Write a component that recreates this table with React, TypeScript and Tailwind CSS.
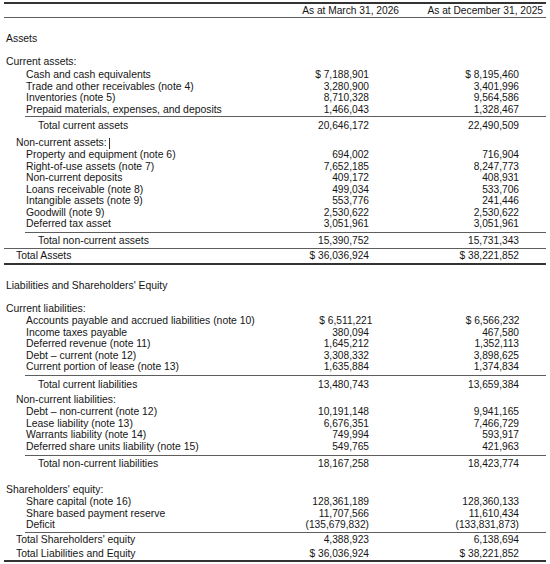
type RowProps = {
  label: string;
  a?: string;
  b?: string;
  h: string;
  pad: string;
  indent?: boolean;
  caret?: boolean;
};

const Row = ({ label, a, b, h, pad, indent, caret }: RowProps) => {
  return (
    <div className={`flex items-center ${h} ${indent ? "ml-[21px]" : ""}`}>
      <div className={`flex-1 whitespace-nowrap text-[10.4px] ${pad}`}>
        {label}
        {caret && <span className="ml-[2px] inline-block h-[11px] w-px bg-[#333] align-middle" />}
      </div>
      <div className="w-[120px] text-right">{a}</div>
      <div className="w-[30px]" />
      <div className="w-[120px] text-right">{b}</div>
      <div className="w-[27px]" />
    </div>
  );
};

const Item = ({ label, a, b }: { label: string; a: string; b: string }) => (
  <Row label={label} a={a} b={b} h="h-[11.5px]" pad="pl-[22px]" />
);

const ThinRule = ({ indent }: { indent?: boolean }) => (
  <div className={`h-px bg-[#5e5e5e] ${indent ? "ml-[21px]" : ""}`} />
);

const ThickRule = () => <div className="h-[2px] bg-[#333]" />;

export default function App() {
  return (
    <div className="h-[564px] w-[550px] overflow-hidden bg-white font-['Liberation_Sans',Arial,sans-serif] text-[10.2px] leading-[11.5px] text-[#151515]">
      <div className="ml-[4px] w-[542px] pt-[2px]">
        <ThickRule />
        {/* column headings */}
        <div className="flex h-[13px] items-center">
          <div className="flex-1" />
          <div className="w-[120px] whitespace-nowrap text-right">As at March 31, 2026</div>
          <div className="w-[147px] whitespace-nowrap pr-[3px] text-right">As at December 31, 2025</div>
        </div>
        <ThinRule />

        <div className="h-[15px]" />
        <Row label="Assets" h="h-[12px]" pad="pl-[2px]" />
        <div className="h-[11px]" />
        <Row label="Current assets:" h="h-[12px]" pad="pl-[2px]" />
        <div className="h-[1px]" />
        <Item label="Cash and cash equivalents" a="$ 7,188,901" b="$ 8,195,460" />
        <Item label="Trade and other receivables (note 4)" a="3,280,900" b="3,401,996" />
        <Item label="Inventories (note 5)" a="8,710,328" b="9,564,586" />
        <Item label="Prepaid materials, expenses, and deposits" a="1,466,043" b="1,328,467" />
        <div className="h-[1px]" />
        <ThinRule indent />
        <Row label="Total current assets" a="20,646,172" b="22,490,509" h="h-[17px]" pad="pl-[13px]" indent />
        <div className="h-[3px]" />
        <Row label="Non-current assets:" h="h-[12px]" pad="pl-[12px]" caret />
        <Item label="Property and equipment (note 6)" a="694,002" b="716,904" />
        <Item label="Right-of-use assets (note 7)" a="7,652,185" b="8,247,773" />
        <Item label="Non-current deposits" a="409,172" b="408,931" />
        <Item label="Loans receivable (note 8)" a="499,034" b="533,706" />
        <Item label="Intangible assets (note 9)" a="553,776" b="241,446" />
        <Item label="Goodwill (note 9)" a="2,530,622" b="2,530,622" />
        <Item label="Deferred tax asset" a="3,051,961" b="3,051,961" />
        <div className="h-[2.5px]" />
        <ThinRule indent />
        <Row label="Total non-current assets" a="15,390,752" b="15,731,343" h="h-[15px]" pad="pl-[13px]" indent />
        <ThinRule />
        <Row label="Total Assets" a="$ 36,036,924" b="$ 38,221,852" h="h-[14px]" pad="pl-[12px]" />
        <ThickRule />

        <div className="h-[15px]" />
        <Row label="Liabilities and Shareholders' Equity" h="h-[12px]" pad="pl-[2px]" />
        <div className="h-[11px]" />
        <Row label="Current liabilities:" h="h-[12px]" pad="pl-[2px]" />
        <Item label="Accounts payable and accrued liabilities (note 10)" a="$ 6,511,221" b="$ 6,566,232" />
        <Item label="Income taxes payable" a="380,094" b="467,580" />
        <Item label="Deferred revenue (note 11)" a="1,645,212" b="1,352,113" />
        <Item label="Debt – current (note 12)" a="3,308,332" b="3,898,625" />
        <Item label="Current portion of lease (note 13)" a="1,635,884" b="1,374,834" />
        <div className="h-[2.5px]" />
        <ThinRule indent />
        <Row label="Total current liabilities" a="13,480,743" b="13,659,384" h="h-[17px]" pad="pl-[13px]" indent />
        <div className="h-[1px]" />
        <Row label="Non-current liabilities:" h="h-[12px]" pad="pl-[12px]" />
        <Item label="Debt – non-current (note 12)" a="10,191,148" b="9,941,165" />
        <Item label="Lease liability (note 13)" a="6,676,351" b="7,466,729" />
        <Item label="Warrants liability (note 14)" a="749,994" b="593,917" />
        <Item label="Deferred share units liability (note 15)" a="549,765" b="421,963" />
        <div className="h-[3px]" />
        <ThinRule indent />
        <Row label="Total non-current liabilities" a="18,167,258" b="18,423,774" h="h-[16px]" pad="pl-[13px]" indent />

        <div className="h-[12px]" />
        <Row label="Shareholders' equity:" h="h-[12px]" pad="pl-[2px]" />
        <Item label="Share capital (note 16)" a="128,361,189" b="128,360,133" />
        <Item label="Share based payment reserve" a="11,707,566" b="11,610,434" />
        <Item label="Deficit" a="(135,679,832)" b="(133,831,873)" />
        <div className="h-[1.5px]" />
        <ThinRule indent />
        <Row label="Total Shareholders' equity" a="4,388,923" b="6,138,694" h="h-[14px]" pad="pl-[12px]" />
        <Row label="Total Liabilities and Equity" a="$ 36,036,924" b="$ 38,221,852" h="h-[13px]" pad="pl-[12px]" />
        <ThickRule />
      </div>
    </div>
  );
}
